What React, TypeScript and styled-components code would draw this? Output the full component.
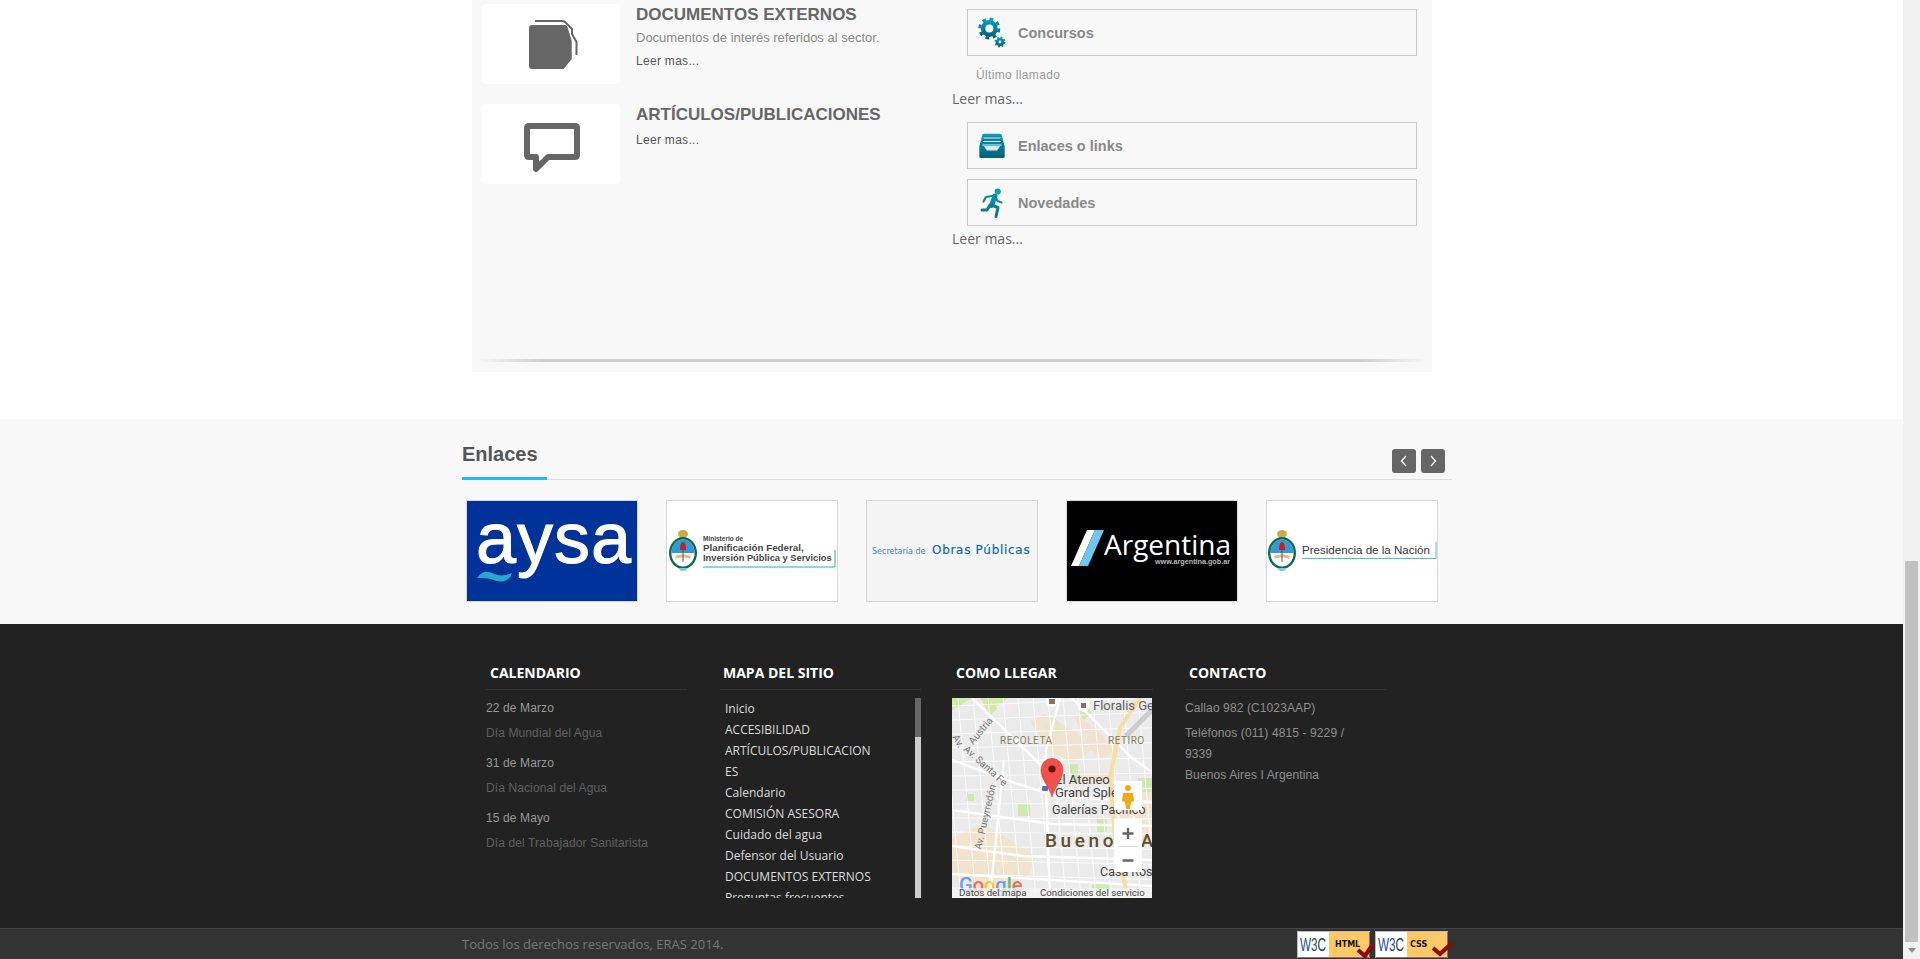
import React from "react";
import styled, { createGlobalStyle } from "styled-components";

const Global = createGlobalStyle`
  html, body { margin: 0; padding: 0; height: 959px; overflow: hidden; background: #fff; }
  * { box-sizing: border-box; }
`;
const arial = `"Liberation Sans", Arial, sans-serif`;
const open = `"Open Sans", "Liberation Sans", sans-serif`;

const Shell = styled.div`display: flex; width: 1920px; height: 959px; overflow: hidden;`;
const Page = styled.div`width: 1903px; height: 959px; display: flex; flex-direction: column;`;
const ScrollTrack = styled.div`width: 17px; height: 959px; background: #f1f1f1; padding: 561px 2px 0; display: flex; flex-direction: column; align-items: center;`;
const ScrollThumb = styled.div`width: 13px; height: 381px; background: #c1c1c1;`;
const ScrollArrow = styled.div`margin-top: 6px; width: 0; height: 0; border-left: 4px solid transparent; border-right: 4px solid transparent; border-top: 5px solid #8e8e8e;`;

const TopArea = styled.section`height: 419px; background: #fff; padding-left: 472px;`;
const Panel = styled.div`width: 960px; height: 372px; background: #f8f8f8; display: flex; flex-direction: column;`;
const PanelGrid = styled.div`height: 359px; display: grid; grid-template-columns: 480px 480px;`;
const LeftCol = styled.div`padding: 4px 0 0 9px; display: flex; flex-direction: column; gap: 20px;`;
const Article = styled.article`display: flex; gap: 15px; height: 80px;`;
const IconBox = styled.div`width: 139px; height: 80px; background: #fff; border-radius: 5px; flex: none; margin-right: 1px;`;
const ArticleBody = styled.div`padding-top: 1px; font-family: ${arial};`;
const ArticleTitle = styled.h3`margin: 0 0 5px; font: bold 17px/20px ${arial}; color: #666;`;
const ArticleText = styled.p`margin: 0 0 5px; font: 13px/16px ${arial}; color: #888;`;
const ReadMore = styled.a`display: block; font: 12px/20px ${arial}; color: #555; letter-spacing: .3px;`;
const RightCol = styled.div`padding-top: 9px;`;
const Tile = styled.div<{ $top?: number }>`
  margin: ${p => p.$top ?? 0}px 0 0 15px; width: 450px; height: 47px; border: 1px solid #c8c8c8;
  display: flex; align-items: center;
`;
const TileIcon = styled.div`width: 50px; height: 34px; display: flex; justify-content: center; align-items: center;`;
const TileLabel = styled.span`font: bold 14.5px/20px ${arial}; color: #888;`;
const TileNote = styled.p`margin: 9px 0 0 24px; font: 12px/20px ${arial}; color: #999; letter-spacing: .35px;`;
const OpenMore = styled.a<{ $top: number }>`display: block; margin-top: ${p => p.$top}px; font: 14px/20px ${open}; color: #666;`;
const Rule = styled.div`
  margin: 0 4px; height: 3px;
  background: linear-gradient(to right, #f8f8f8, #cfcfcf 7%, #cfcfcf 93%, #f8f8f8);
`;

const Links = styled.section`height: 205px; background: #f8f8f8; padding-left: 462px;`;
const LinksHead = styled.div`width: 990px; height: 61px; border-bottom: 1px solid #ddd; display: flex; justify-content: space-between; padding: 0 7px 0 0;`;
const LinksTitle = styled.h2`
  margin: 0 0 -1px; width: 85px; height: 61px; padding-top: 22px; border-bottom: 3px solid #29b9e8;
  font: bold 20px/26px ${arial}; color: #555;
`;
const Arrows = styled.div`display: flex; gap: 5px; padding-top: 30px;`;
const ArrowBtn = styled.button`
  width: 24px; height: 24px; padding: 0; border: 0; border-radius: 3px; background: #666;
  display: flex; align-items: center; justify-content: center;
`;
const LogoRow = styled.div`display: flex; gap: 28px; margin: 20px 0 0 4px;`;
const Logo = styled.a<{ $bg: string }>`display: block; width: 172px; height: 102px; border: 1px solid #d5d5d5; background: ${p => p.$bg};`;
const LogoArt = styled.svg`display: block; width: 170px; height: 100px;`;

const Footer = styled.footer`height: 304px; background: #222; padding: 38px 0 0 486px;`;
const FooterGrid = styled.div`display: grid; grid-template-columns: 234px 232px 233px 202px;`;
const Col = styled.div`width: 201px;`;
const ColTitle = styled.h4<{ $pad?: number }>`
  margin: 0; height: 28px; padding: 1px 0 6px ${p => p.$pad ?? 4}px; border-bottom: 1px solid #333;
  font: bold 14px/20px ${open}; color: #fff;
`;
const ColBody = styled.div`margin-top: 8px; font: 12px/20px ${arial}; letter-spacing: .11px;`;
const EventDate = styled.div`color: #999; margin-bottom: 5px;`;
const EventName = styled.div`color: #606060; margin-bottom: 10px;`;
const SiteBox = styled.div`margin-top: 8px; height: 200px; display: flex; justify-content: space-between; overflow: hidden;`;
const SiteList = styled.ul`
  margin: 0; padding: 0 0 0 5px; list-style: none; width: 155px; overflow-wrap: anywhere;
  font: 12px/21px ${open}; color: #ddd;
`;
const SiteTrack = styled.div`width: 6px; height: 200px; background: #ccc;`;
const SiteThumb = styled.div`height: 39px; background: #666;`;
const MapFrame = styled.svg`display: block; margin-top: 8px; width: 200px; height: 200px;`;
const ContactLine = styled.p`margin: 0 0 5px; color: #8f8f8f; width: 170px;`;
const ContactBlock = styled.p`margin: 0; color: #8f8f8f; width: 170px; line-height: 21px;`;

const Bottom = styled.div`height: 31px; background: #333; border-top: 1px solid #444; padding-left: 462px;`;
const BottomInner = styled.div`width: 986px; display: flex; justify-content: space-between; align-items: flex-start;`;
const Copy = styled.span`font: 13px/30px ${open}; color: #777;`;
const Badges = styled.div`display: flex; gap: 5px; padding-top: 2px;`;
const Badge = styled.svg`display: block; width: 73px; height: 27px; overflow: visible;`;

function Arms({ x, y, s = 1 }: { x: number; y: number; s?: number }) {
  return (
    <g transform={`translate(${x} ${y}) scale(${s})`}>
      <ellipse cx="15" cy="4" rx="5" ry="4" fill="#c9a94a" />
      <ellipse cx="15" cy="23" rx="14" ry="16" fill="#0e6a4a" />
      <ellipse cx="15" cy="23" rx="11.6" ry="13.6" fill="#fff" />
      <path d="M3.4 23a11.6 13.6 0 0 1 23.2 0z" fill="#2f9bd4" />
      <path d="M12 20c0-5 1-8 3-8s3 3 3 8z" fill="#c8201f" />
      <path d="M7 26c4-2 12-2 16 0l-1 3c-4-2-10-2-14 0z" fill="#eab98a" />
      <path d="M15 20v12" stroke="#555" strokeWidth="1" />
      <path d="M10 38h10l-3 3h-4z" fill="#7cc8e8" />
    </g>
  );
}

function Gear({ cx, cy, r, hole }: { cx: number; cy: number; r: number; hole: number }) {
  const tooth = r * 0.26;
  const ringR = r - tooth / 2;
  const len = 2 * Math.PI * ringR;
  return (
    <g>
      <circle cx={cx} cy={cy} r={ringR} fill="none" stroke="url(#teal)" strokeWidth={tooth} strokeDasharray={`${len / 16} ${len / 16}`} />
      <circle cx={cx} cy={cy} r={r - tooth + 0.3} fill="url(#teal)" />
      <circle cx={cx} cy={cy} r={hole} fill="#fff" />
    </g>
  );
}

const sites = ["Inicio", "ACCESIBILIDAD", "ARTÍCULOS/PUBLICACIONES", "Calendario", "COMISIÓN ASESORA", "Cuidado del agua", "Defensor del Usuario", "DOCUMENTOS EXTERNOS", "Preguntas frecuentes", "Enlaces o links"];
const events = [["22 de Marzo", "Día Mundial del Agua"], ["31 de Marzo", "Día Nacional del Agua"], ["15 de Mayo", "Día del Trabajador Sanitarista"]];

function MapArt() {
  return (
    <MapFrame viewBox="0 0 200 200">
      <rect width="200" height="200" fill="#ebebeb" />
      <path d="M0 0h20L0 12z M28 0h28L38 18z" fill="#cdeaa9" />
      <path d="M44 8l12-6 6 10-12 6z" fill="#f6e8f0" />
      <path d="M90 28l12-9 10 14-14 11z M126 14l8-6 6 6-8 8z" fill="#cfe8b0" />
      <path d="M78 24l14-8 22 12 10 6 16 18-18 12-22-8z M120 14l26 18 18 22-18 8-12-18z" fill="#f1e3cd" opacity=".85" />
      <path d="M120 74h42v12h-42z M190 90h10v40h-10z M168 112h32v32h-32z" fill="#f1e3cd" opacity=".8" />
      <path d="M0 140l30-14 24 14 30 18 -8 20-14 10-16 6H24l-8-10-16-6z" fill="#f1e3cd" />
      <path d="M118 66h8v18h-8z M145 120h10v14h-10z M66 106h12v12H66z M14 96h8v7h-8z M186 80h14v14h-14z M140 186h18v8h-18z" fill="#cfe8b0" />
      <g stroke="#fff" strokeWidth="1" fill="none" opacity=".85">
        {Array.from({ length: 16 }, (_, i) => <path key={`a${i}`} d={`M${i * 15 - 24} 0l18 200`} />)}
        {Array.from({ length: 16 }, (_, i) => <path key={`b${i}`} d={`M0 ${i * 14 - 6}l200 ${-10 + i * 1.2}`} />)}
      </g>
      <g stroke="#fff" strokeWidth="2.4" fill="none">
        <path d="M0 62l60 22 44 14 96 6" />
        <path d="M0 112l100 14 100 2" />
        <path d="M0 148l70 10 130 4" />
        <path d="M52 62L38 200" />
        <path d="M94 86l4 114" />
        <path d="M108 0l-14 52 -2 34" />
        <path d="M20 0L96 74" />
        <path d="M0 176l200 12" />
        <path d="M120 0l60 60 20 14" />
      </g>
      <path d="M188 0l-20 30-10 50 6 70 12 50" stroke="#f6dfa0" strokeWidth="4" fill="none" />
      <path d="M200 12l-26 26" stroke="#ccc" strokeWidth="5" fill="none" />
      <g fontFamily="Roboto, sans-serif">
        <circle cx="132" cy="8" r="6" fill="#fff" />
        <rect x="129" y="5" width="5" height="5" fill="#8d6e63" />
        <circle cx="100" cy="3" r="6" fill="#fff" />
        <rect x="97" y="1" width="6" height="5" fill="#8d6e63" />
        <text x="141" y="12" fontSize="13" fill="#616161">Floralis Ge</text>
        <text x="48" y="46" fontSize="10" fill="#8a7a5c" letterSpacing=".5">RECOLETA</text>
        <text x="156" y="46" fontSize="10" fill="#8a7a5c" letterSpacing=".5">RETIRO</text>
        <text x="103" y="86" fontSize="13" fill="#444">El Ateneo</text>
        <text x="103" y="99" fontSize="13" fill="#444">Grand Sple</text>
        <text x="100" y="116" fontSize="12.500" fill="#444">Galerías Pacífico</text>
        <text x="93" y="149" fontSize="19" fontWeight="500" fill="#5f4f2e" letterSpacing="3.6" wordSpacing="2">Buenos A</text>
        <text x="148" y="178" fontSize="12.500" fill="#444">Casa Ros</text>
        <text transform="translate(21 47) rotate(-50)" fontSize="10" fill="#777">Austria</text>
        <text transform="translate(11 52) rotate(42)" fontSize="10" fill="#777">Av. Santa Fe</text>
        <text transform="translate(29 152) rotate(-77)" fontSize="10" fill="#777">Av. Pueyrredón</text>
        <text transform="translate(0 39) rotate(60)" fontSize="10" fill="#777">Av.</text>
      </g>
      <circle cx="93" cy="90" r="5.5" fill="#fff" />
      <rect x="90" y="88" width="6" height="5" rx="1" fill="#5c6bc0" />
      <path d="M100 99C97 88 89 82 89 71.5a11 11 0 0 1 22 0C111 82 103 88 100 99z" fill="#f1514b" stroke="#c9423c" strokeWidth=".6" />
      <circle cx="100" cy="71" r="3.6" fill="#611513" />
      <rect x="162" y="83" width="28" height="29" fill="#fff" />
      <circle cx="176" cy="90" r="3" fill="#f0a81c" />
      <path d="M171 95h10l1 8-3 1-1 7h-4l-1-7-3-1z" fill="#f0a81c" />
      <rect x="162" y="121" width="28" height="53" fill="#fff" />
      <path d="M176 130v11M170.500 135.500h11M170.500 162.500h11" stroke="#666" strokeWidth="2.4" />
      <path d="M166 148.500h20" stroke="#ddd" strokeWidth="1" />
      <g fontFamily="Roboto, sans-serif" fontSize="20" fontWeight="500" opacity=".75">
        <text x="7" y="194"><tspan fill="#4285f4">G</tspan><tspan fill="#ea4335">o</tspan><tspan fill="#fbbc05">o</tspan><tspan fill="#4285f4">g</tspan><tspan fill="#34a853">l</tspan><tspan fill="#ea4335">e</tspan></text>
      </g>
      <rect y="190" width="200" height="10" fill="#f5f5f5" opacity=".7" />
      <g fontFamily="Roboto, sans-serif" fontSize="9.700" fill="#444">
        <text x="7" y="197.500">Datos del mapa</text>
        <text x="88" y="197.500">Condiciones del servicio</text>
      </g>
    </MapFrame>
  );
}

function W3c({ label, x, check }: { label: string; x: number; check: string }) {
  return (
    <Badge viewBox="0 0 73 27">
      <rect x=".5" y=".5" width="72" height="26" fill="#fff" stroke="#bbb" />
      <rect x="32" y="1" width="40" height="25" fill="#ffc966" />
      <path d="M72.500 1v25.500H1" stroke="#777" fill="none" />
      <text x="3" y="20" fontFamily='"Liberation Sans", sans-serif' fontSize="18" textLength="26" lengthAdjust="spacingAndGlyphs"><tspan fill="#1b4f9c">W3</tspan><tspan fill="#333">C</tspan></text>
      <text x={x} y="16" fontFamily='"DejaVu Sans", sans-serif' fontSize="8" fontWeight="700" fill="#111">{label}</text>
      <path d={check} stroke="#8c0b0b" strokeWidth="4.2" fill="none" />
    </Badge>
  );
}

export default function App() {
  return (
    <>
      <Global />
      <Shell>
        <Page>
          <TopArea>
            <Panel>
              <PanelGrid>
                <LeftCol>
                  <Article>
                    <IconBox>
                      <svg width="139" height="80" viewBox="0 0 139 80">
                        <path d="M54 17h27q2 0 3 1l7 7v5l4.500 8v13" fill="none" stroke="#666" strokeWidth="2" />
                        <path d="M51 21h33q2 0 2.500 2l4.200 14v18l-8 10H51q-3 0-3-3V24q0-3 3-3z" fill="#666" />
                      </svg>
                    </IconBox>
                    <ArticleBody>
                      <ArticleTitle>DOCUMENTOS EXTERNOS</ArticleTitle>
                      <ArticleText>Documentos de interés referidos al sector.</ArticleText>
                      <ReadMore>Leer mas...</ReadMore>
                    </ArticleBody>
                  </Article>
                  <Article>
                    <IconBox>
                      <svg width="139" height="80" viewBox="0 0 139 80">
                        <path d="M48 22h46q2 0 2 2v27q0 2-2 2H67L55 65V53h-7q-2 0-2-2V24q0-2 2-2z" fill="none" stroke="#666" strokeWidth="6" strokeLinejoin="round" />
                      </svg>
                    </IconBox>
                    <ArticleBody>
                      <ArticleTitle>ARTÍCULOS/PUBLICACIONES</ArticleTitle>
                      <ReadMore>Leer mas...</ReadMore>
                    </ArticleBody>
                  </Article>
                </LeftCol>
                <RightCol>
                  <Tile>
                    <TileIcon>
                      <svg width="34" height="34" viewBox="0 0 34 34">
                        <defs>
                          <linearGradient id="teal" x1="0" y1="0" x2="0" y2="1">
                            <stop offset="0" stopColor="#0a9cbc" />
                            <stop offset="1" stopColor="#06607a" />
                          </linearGradient>
                        </defs>
                        <Gear cx={13.3} cy={12.5} r={11} hole={4} />
                        <Gear cx={24} cy={26} r={5.5} hole={1.4} />
                      </svg>
                    </TileIcon>
                    <TileLabel>Concursos</TileLabel>
                  </Tile>
                  <TileNote>Último llamado</TileNote>
                  <OpenMore $top={4}>Leer mas...</OpenMore>
                  <Tile $top={13}>
                    <TileIcon>
                      <svg width="34" height="34" viewBox="0 0 34 34">
                        <defs>
                          <linearGradient id="tray" x1="0" y1="0" x2="0" y2="1">
                            <stop offset="0" stopColor="#0c9dbb" />
                            <stop offset="1" stopColor="#055f78" />
                          </linearGradient>
                        </defs>
                        <path d="M7.700 4.800h16.600q1 0 1.300 1L28.700 17v10.500q0 1.500-1.500 1.500H4.800q-1.500 0-1.500-1.500V17L6.400 5.800q.3-1 1.300-1z" fill="url(#tray)" />
                        <path d="M8 7.500h16l2 9H6z" fill="#0b84a0" />
                        <path d="M7.500 9h17M7 12.500h18M6.500 16h19" stroke="#dff2f6" strokeWidth="1" />
                        <path d="M7.700 17h16.600l-3.300 4.500H11z" fill="#d6e9ee" />
                      </svg>
                    </TileIcon>
                    <TileLabel>Enlaces o links</TileLabel>
                  </Tile>
                  <Tile $top={10}>
                    <TileIcon>
                      <svg width="34" height="34" viewBox="0 0 34 34" fill="none" stroke="#0a8aa6" strokeLinejoin="round" strokeLinecap="round">
                        <circle cx="21.700" cy="5.500" r="3.100" fill="#0a9cbc" stroke="none" />
                        <path d="M19 10l-3.500 9.500" strokeWidth="5" />
                        <path d="M19 9.500l-9 1.500-2.500 4.500" strokeWidth="2.200" />
                        <path d="M20 12l1.500 3 4 1.500" strokeWidth="2" />
                        <path d="M15.500 19l6.500 2.500-2 9" strokeWidth="3" stroke="#087b96" />
                        <path d="M14 19l-3 5H6" strokeWidth="3" stroke="#087b96" />
                      </svg>
                    </TileIcon>
                    <TileLabel>Novedades</TileLabel>
                  </Tile>
                  <OpenMore $top={3}>Leer mas...</OpenMore>
                </RightCol>
              </PanelGrid>
              <Rule />
            </Panel>
          </TopArea>

          <Links>
            <LinksHead>
              <LinksTitle>Enlaces</LinksTitle>
              <Arrows>
                <ArrowBtn aria-label="Anterior">
                  <svg width="8" height="12" viewBox="0 0 8 12"><path d="M6 1L1.500 6 6 11" fill="none" stroke="#fff" strokeWidth="1.3" /></svg>
                </ArrowBtn>
                <ArrowBtn aria-label="Siguiente">
                  <svg width="8" height="12" viewBox="0 0 8 12"><path d="M2 1l4.500 5L2 11" fill="none" stroke="#fff" strokeWidth="1.3" /></svg>
                </ArrowBtn>
              </Arrows>
            </LinksHead>
            <LogoRow>
              <Logo $bg="#003399">
                <LogoArt viewBox="0 0 170 100">
                  <text x="9" y="62" fontFamily='"Liberation Sans", sans-serif' fontSize="72" fill="#fff" stroke="#fff" strokeWidth="1" letterSpacing="1">aysa</text>
                  <path d="M10 77c6-8 11-7 17-4 6 2 11 2 18-1-3 9-10 10-18 7-6-2-11-2-17-2z" fill="#27a9cf" />
                </LogoArt>
              </Logo>
              <Logo $bg="#fff">
                <LogoArt viewBox="0 0 170 100">
                  <Arms x={1} y={29} />
                  <g fontFamily='"Liberation Sans", sans-serif' fontWeight="700" fill="#444">
                    <text x="36" y="40" fontSize="6.500">Ministerio de</text>
                    <text x="36" y="50" fontSize="9.800">Planificación Federal,</text>
                    <text x="36" y="60" fontSize="9.300">Inversión Pública y Servicios</text>
                  </g>
                  <path d="M36 66h132V49" fill="none" stroke="#2aa6c9" strokeWidth="1" />
                </LogoArt>
              </Logo>
              <Logo $bg="#f4f4f4">
                <LogoArt viewBox="0 0 170 100">
                  <text x="5" y="53" fontFamily='"DejaVu Sans", sans-serif' fontSize="8" fill="#3d87ae">Secretaría de</text>
                  <text x="65" y="53" fontFamily='"DejaVu Sans", sans-serif' fontSize="12" fill="#0a679c" letterSpacing=".7" stroke="#0a679c" strokeWidth=".15">Obras Públicas</text>
                </LogoArt>
              </Logo>
              <Logo $bg="#000">
                <LogoArt viewBox="0 0 170 100">
                  <path d="M4 65l16-36h8L12 65z" fill="#fff" />
                  <path d="M12 65l16-36h9L21 65z" fill="#6ec6f1" />
                  <text x="37" y="54" fontFamily='"Open Sans", sans-serif' fontSize="28" fill="#fff">Argentina</text>
                  <text x="88" y="63" fontFamily='"Liberation Sans", sans-serif' fontSize="7.500" fontWeight="700" fill="#bbb" textLength="75" lengthAdjust="spacingAndGlyphs">www.argentina.gob.ar</text>
                </LogoArt>
              </Logo>
              <Logo $bg="#fff">
                <LogoArt viewBox="0 0 170 100">
                  <Arms x={0} y={29} />
                  <text x="35" y="53" fontFamily='"Liberation Sans", sans-serif' fontSize="11.500" fill="#333" textLength="128" lengthAdjust="spacingAndGlyphs">Presidencia de la Nación</text>
                  <path d="M35 57.500h134V41" fill="none" stroke="#4cc0d2" strokeWidth="1" />
                </LogoArt>
              </Logo>
            </LogoRow>
          </Links>

          <Footer>
            <FooterGrid>
              <Col>
                <ColTitle>CALENDARIO</ColTitle>
                <ColBody>
                  {events.map(([d, n]) => (
                    <React.Fragment key={d}>
                      <EventDate>{d}</EventDate>
                      <EventName>{n}</EventName>
                    </React.Fragment>
                  ))}
                </ColBody>
              </Col>
              <Col>
                <ColTitle $pad={3}>MAPA DEL SITIO</ColTitle>
                <SiteBox>
                  <SiteList>
                    {sites.map(s => <li key={s}>{s}</li>)}
                  </SiteList>
                  <SiteTrack><SiteThumb /></SiteTrack>
                </SiteBox>
              </Col>
              <Col>
                <ColTitle>COMO LLEGAR</ColTitle>
                <MapArt />
              </Col>
              <Col>
                <ColTitle>CONTACTO</ColTitle>
                <ColBody>
                  <ContactLine>Callao 982 (C1023AAP)</ContactLine>
                  <ContactBlock>Teléfonos (011) 4815 - 9229 / 9339<br />Buenos Aires I Argentina</ContactBlock>
                </ColBody>
              </Col>
            </FooterGrid>
          </Footer>

          <Bottom>
            <BottomInner>
              <Copy>Todos los derechos reservados, ERAS 2014.</Copy>
              <Badges>
                <W3c label="HTML" x={38} check="M61 19l7 6 8-12" />
                <W3c label="CSS" x={35} check="M58 17l7 6 12-11" />
              </Badges>
            </BottomInner>
          </Bottom>
        </Page>
        <ScrollTrack>
          <ScrollThumb />
          <ScrollArrow />
        </ScrollTrack>
      </Shell>
    </>
  );
}
